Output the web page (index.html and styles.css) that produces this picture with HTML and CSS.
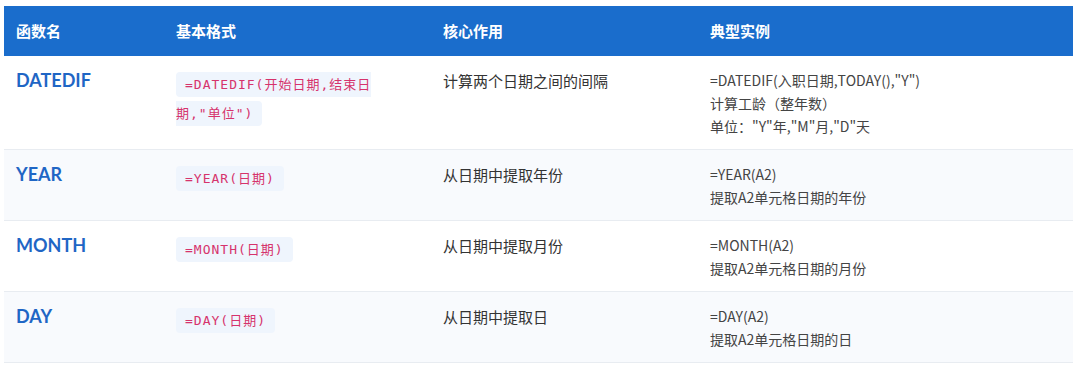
FILE: index.html
```html
<!DOCTYPE html>
<html lang="zh-CN">
<head>
<meta charset="utf-8">
<title>日期函数</title>
<link rel="stylesheet" href="styles.css">
</head>
<body>
<div class="wrap">
  <table class="fn-table">
    <colgroup>
      <col class="c-name">
      <col class="c-fmt">
      <col class="c-use">
      <col class="c-ex">
    </colgroup>
    <thead>
      <tr>
        <th>函数名</th>
        <th>基本格式</th>
        <th>核心作用</th>
        <th>典型实例</th>
      </tr>
    </thead>
    <tbody>
      <tr>
        <td class="name">DATEDIF</td>
        <td class="fmt"><code>=DATEDIF(开始日期,结束日期,"单位")</code></td>
        <td class="use">计算两个日期之间的间隔</td>
        <td class="ex">=DATEDIF(入职日期,TODAY(),"Y")<br>计算工龄（整年数）<br>单位："Y"年,"M"月,"D"天</td>
      </tr>
      <tr class="alt">
        <td class="name">YEAR</td>
        <td class="fmt"><code>=YEAR(日期)</code></td>
        <td class="use">从日期中提取年份</td>
        <td class="ex">=YEAR(A2)<br>提取A2单元格日期的年份</td>
      </tr>
      <tr>
        <td class="name">MONTH</td>
        <td class="fmt"><code>=MONTH(日期)</code></td>
        <td class="use">从日期中提取月份</td>
        <td class="ex">=MONTH(A2)<br>提取A2单元格日期的月份</td>
      </tr>
      <tr class="alt">
        <td class="name">DAY</td>
        <td class="fmt"><code>=DAY(日期)</code></td>
        <td class="use">从日期中提取日</td>
        <td class="ex">=DAY(A2)<br>提取A2单元格日期的日</td>
      </tr>
    </tbody>
  </table>
</div>
</body>
</html>
```
FILE: styles.css
```css
html, body {
  margin: 0;
  padding: 0;
  background: #ffffff;
}

.wrap {
  padding: 6px 7px 0 4px;
}

.fn-table {
  width: 1069px;
  table-layout: fixed;
  border-collapse: collapse;
  font-family: "Noto Sans CJK SC", "Noto Sans", sans-serif;
}

.c-name { width: 160px; }
.c-fmt { width: 267px; }
.c-use { width: 267px; }
.c-ex { width: 375px; }

.fn-table th {
  background: #1a6dcc;
  color: #ffffff;
  font-size: 15px;
  font-weight: 700;
  text-align: left;
  height: 50px;
  padding: 0 12px;
  line-height: 20px;
  vertical-align: middle;
}

.fn-table td {
  vertical-align: top;
  padding: 13px 12px 11px;
  line-height: 23px;
  border-bottom: 1px solid #e8ecf1;
}

.fn-table tr.alt td {
  background: #f8fafd;
}

.name {
  font-family: Lato, "Open Sans", sans-serif;
  font-weight: 700;
  font-size: 18px;
  color: #1f66c5;
}

.fn-table td.fmt {
  padding-right: 55px;
  line-height: 27px;
}

.fmt code {
  font-family: "DejaVu Sans Mono", "Noto Sans CJK SC", monospace;
  font-size: 13px;
  letter-spacing: 1px;
  color: #d6336c;
  background: #eff5fd;
  padding: 5px 9px;
  border-radius: 4px;
}

.use {
  font-size: 15px;
  color: #333333;
}

.ex {
  font-size: 14px;
  color: #444444;
}
```
